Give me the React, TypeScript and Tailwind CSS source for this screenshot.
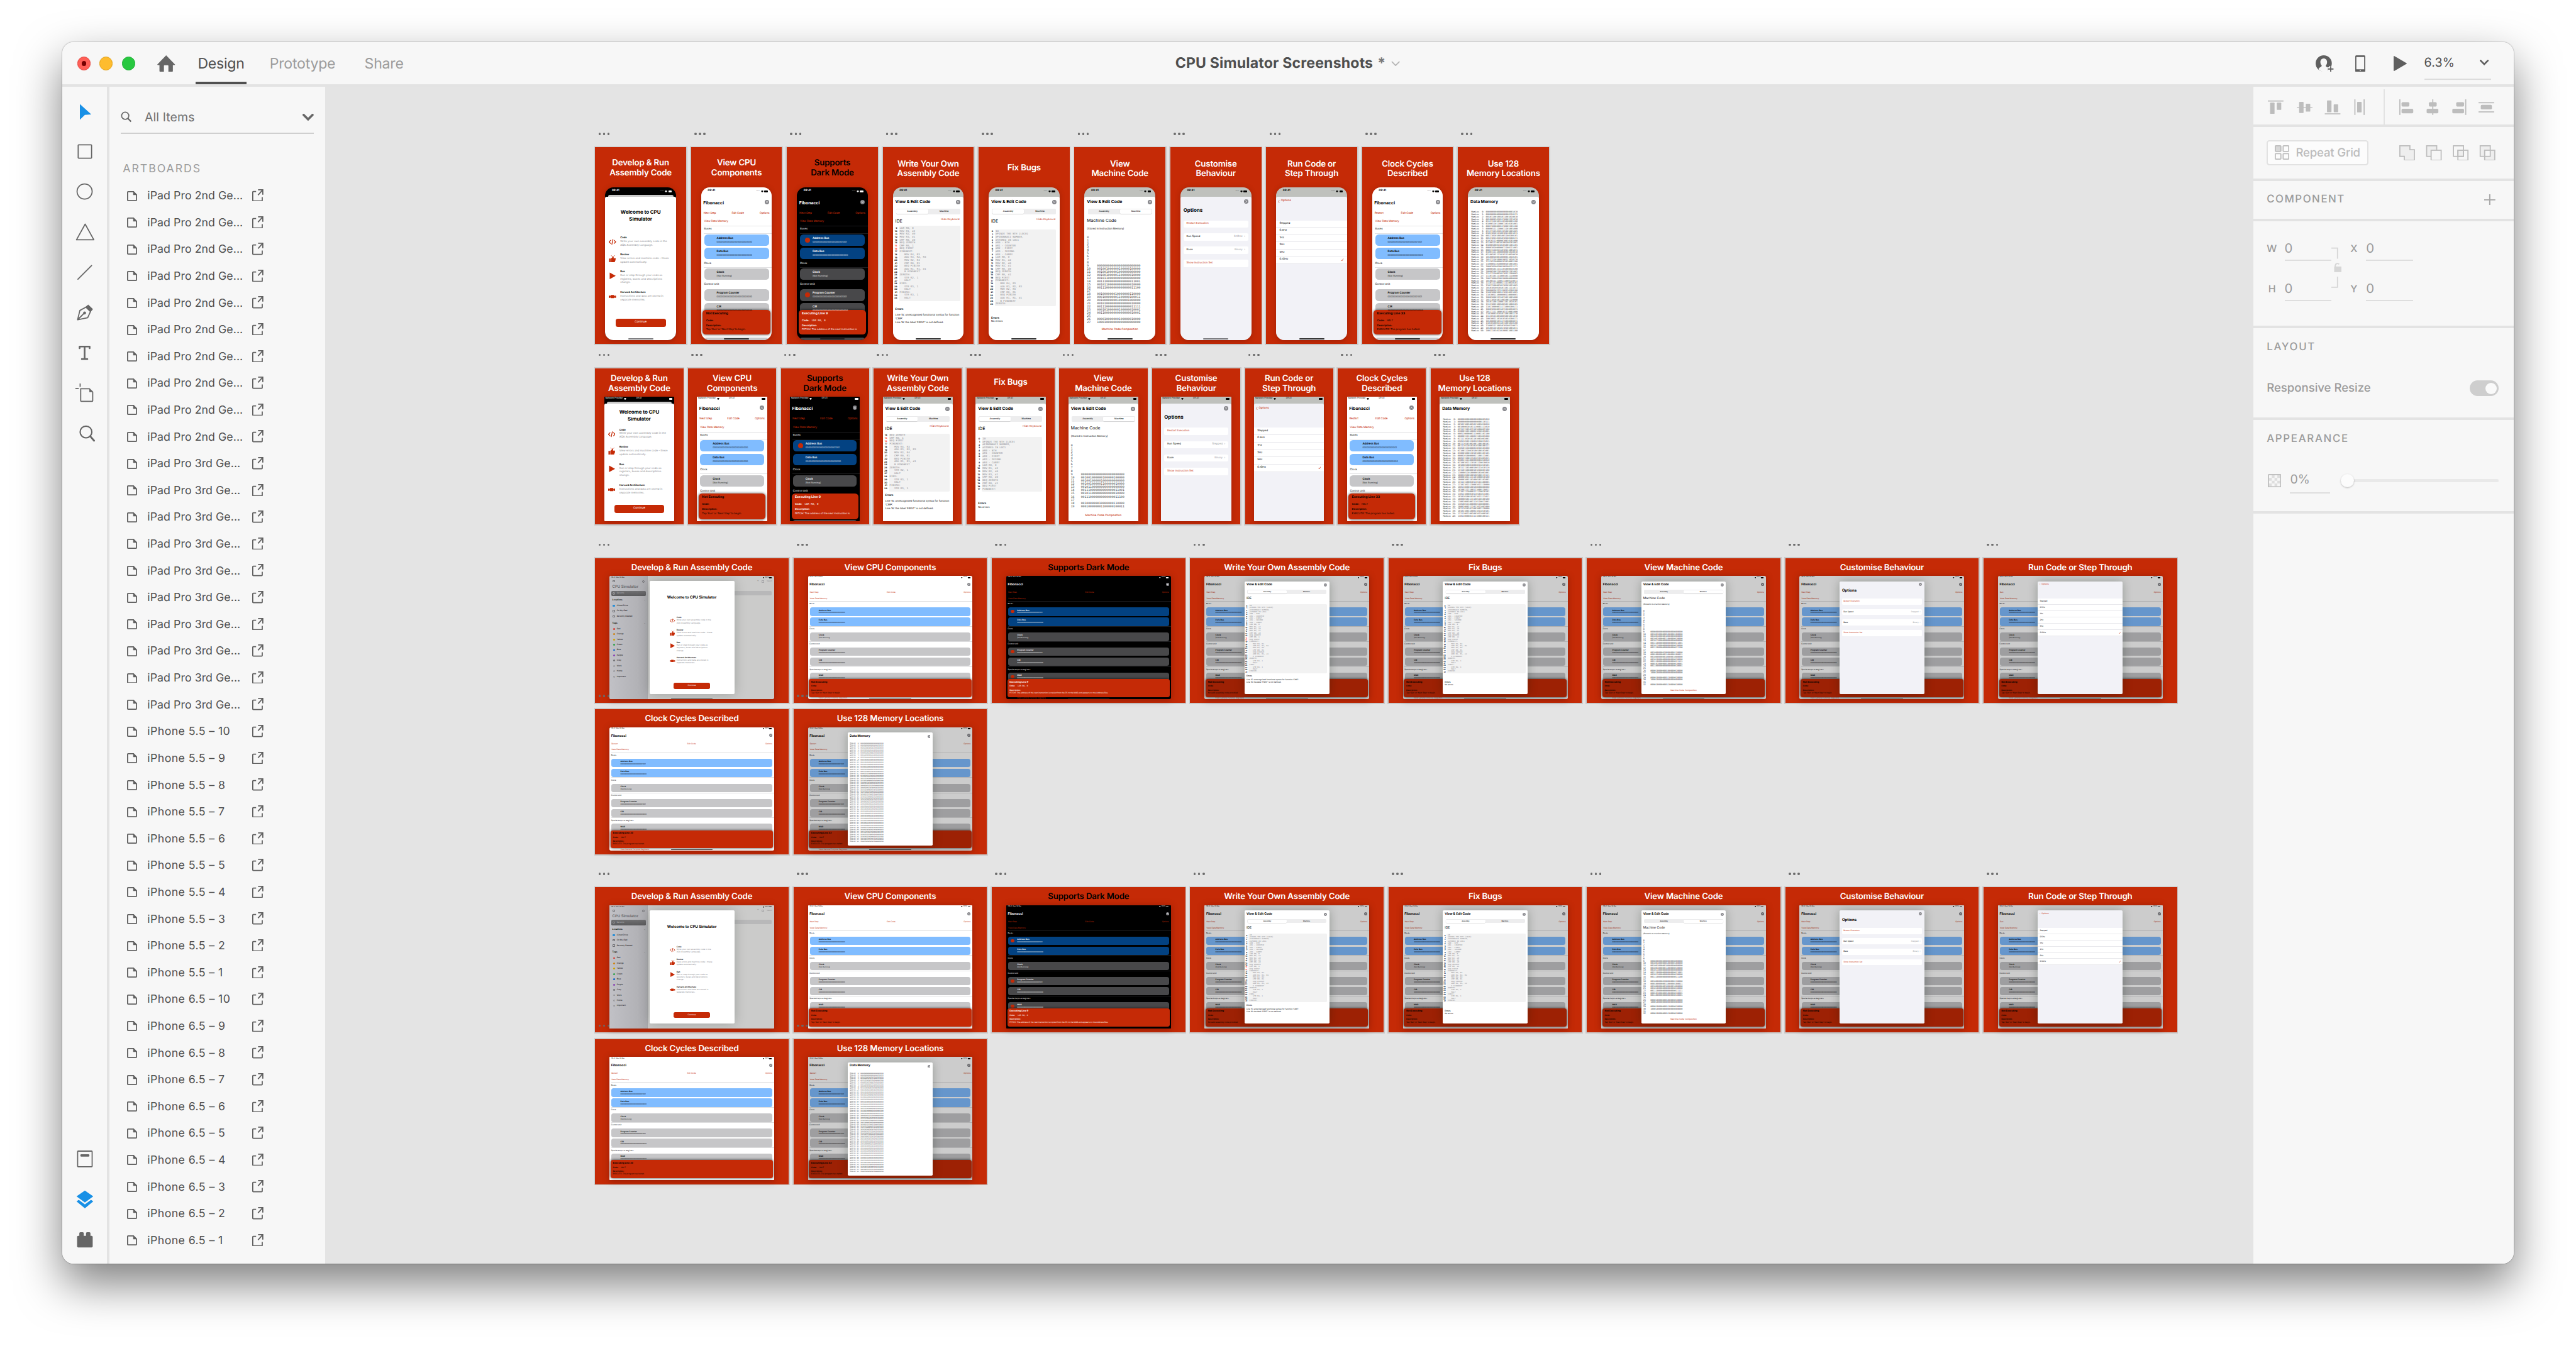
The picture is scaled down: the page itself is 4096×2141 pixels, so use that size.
import React from "react";

/* ---------- vertical flow helper ---------- */

type Item = { top: number; h: number; node: React.ReactNode };
const line = (center: number, node: React.ReactNode): Item => ({ top: center - 2, h: 4, node });
const block = (top: number, bottom: number, node: React.ReactNode): Item => ({ top, h: bottom - top, node });

function Flow({ items }: { items: Item[] }) {
  let bottom = 0;
  return (
    <div className="flex h-full w-full flex-col">
      {items.map((item, i) => {
        const marginTop = item.top - bottom;
        bottom = item.top + item.h;
        return (
          <div key={i} className="flex w-full shrink-0 items-center leading-none whitespace-nowrap" style={{ marginTop, height: item.h }}>
            {item.node}
          </div>
        );
      })}
    </div>
  );
}

/* ---------- data ---------- */

const CODE: string[] = [
  "10", "#FINDS THE NTH (LOC0)", "#FIBONNACI NUMBER,", "#STORED IN LOC1", "#R0 - NTH", "#R1 - COUNTER", "#R2 - FIRST",
  "#R3 - SECOND", "#R4 - CARRY", "LDR R0, 0", "MOV R1, #2", "MOV R2, #0", "MOV R3, #1", "CMP R0, #0", "BEQ ZEROTH",
  "CMP R0, #1", "BEQ FIRST", "FINDNEXT:", "   MOV R4, R3", "   ADD R3, R2, R3", "   MOV R2, R4", "   CMP R0, R1",
  "   BEQ FINISH", "   ADD R1, R1, #1", "   B FINDNEXT", "ZEROTH:", "   STR R2, 1", "   HALT", "FIRST:", "   STR R3, 1",
  "   HALT", "FINISH:", "   STR R3, 1", "   HALT",
];
const BROKEN = CODE.map((c, i) => (i === 15 ? "CMP R0, 1" : i === 28 ? "FIRS:" : c));

const MACHINE: Record<number, string> = {
  9: "000000000000000000000000", 10: "001001000000100000100000", 11: "001001000001000000000000", 12: "001001000001100000010000",
  13: "001011000000000000000000", 14: "001110000000000000011001", 15: "001011000000000000010000", 16: "001110000000000000011100",
  18: "001000000010000000110000", 19: "000100000001100000100011", 20: "001000000001000001000000", 21: "001010000000000000010000",
  22: "001110000000000000011111", 23: "000101000000100000010001", 24: "001100000000000000010001", 26: "000010000000100000010000",
  27: "100010000000000000000000", 29: "000010000000110000010000", 30: "100010000000000000000000", 32: "000010000000110000010000",
};

function bits(seed: number) {
  let s = (seed + 3) * 7919;
  let out = "";
  for (let i = 0; i < 24; i++) {
    s = (s * 1103515245 + 12345) % 2147483648;
    out += (s >> 16) & 1;
  }
  return out;
}
const memory = (i: number) =>
  `MemLoc ${i < 10 ? " " : ""}${i}: ${i === 0 ? "000000000000000000001010" : i === 1 ? "000000000000000000110111" : bits(i)}`;

const ZEROS = "000000000000000000000000";

/* ---------- small pieces ---------- */

function Close({ size, className = "" }: { size: number; className?: string }) {
  return (
    <svg viewBox="0 0 10 10" width={size} height={size} className={`shrink-0 ${className}`}>
      <circle cx="5" cy="5" r="5" fill="#85858a" />
      <path d="M3.3 3.3l3.4 3.4M6.7 3.3L3.3 6.7" stroke="#fff" strokeWidth="1.1" />
    </svg>
  );
}

function Wifi({ size }: { size: number }) {
  return (
    <svg viewBox="0 0 10 8" width={size} height={size * 0.8} className="shrink-0">
      <path d="M5 8L0 2.2Q5 -1.8 10 2.2z" fill="currentColor" />
    </svg>
  );
}

function FeatureIcon({ kind, size }: { kind: number; size: number }) {
  return (
    <svg viewBox="0 0 24 24" width={size} height={size} className="shrink-0" fill="#c52a06">
      {kind === 0 && <path d="M7 6L1 12l6 6M17 6l6 6-6 6M14 3l-4 18" fill="none" stroke="#c52a06" strokeWidth="2.6" />}
      {kind === 1 && (
        <>
          <path d="M1 11h5v12H1zM7 11l5-4V3c3-1 5 1 4 7h6c2 1 1 3 0 4 1 1 1 3-1 4 0 2-1 5-3 5H7z" />
          <path d="M8 0l1.500 3M14 -3v3M20 0l-2 3" stroke="#c52a06" strokeWidth="1.500" />
        </>
      )}
      {kind === 2 && <path d="M3 1l20 11L3 23z" />}
      {kind === 3 && <path d="M0 9h5v7H0zM6 7h11v10H6zM18 9h6v7h-6zM3 11h18v3H3z" />}
    </svg>
  );
}

const FEATURES = [
  { title: "Code", lines: ["Write your own assembly code in the", "AQA Assembly Language."] },
  { title: "Review", lines: ["View errors and machine code – these", "update automatically."] },
  { title: "Run", lines: ["Run or step through your code as", "registers, buses and descriptions", "change."] },
  { title: "Harvard Architecture", lines: ["Instructions and data are stored in", "separate memories."] },
];

type Exec = { title: string; code?: string; text: string; first: string };
const IDLE: Exec = { title: "Not Executing", text: "Tap ‘Run’ or ‘Next Step’ to begin.", first: "Next Step" };
const NINE: Exec = { title: "Executing Line 9", code: "LDR R0, 0", text: "FETCH: The address of the next instruction is", first: "Next Step" };
const HALT: Exec = { title: "Executing Line 33", code: "HALT", text: "EXECUTE: The program has halted.", first: "Restart" };

/* ---------- phone screens ---------- */

const TALL = {
  tall: true,
  sheet: 17,
  welcome: { title: [44, 56.500], heads: [91.500, 122, 152.500, 189.500], button: [235, 250.500] },
  fib: { title: 29, close: 26.500, links: 47.500, vdm: 62.500, rule: 68, buses: 75.500, bars: [84, 108, 145, 182.500, 207], clock: 137, unit: 174.500, panel: [219.500, 264] },
  edit: { title: 26.500, seg: [38.500, 48], head: 60, keyboard: 58.500, pitch: 5.220 },
  broken: { box: [69, 204], first: 9, last: 33, y: 74.300, errors: [220, 230, 236.500, 243] },
  fixed: { box: [75, 212.500], first: 0, last: 25, y: 79.500, errors: [235, 241] },
  machine: { stored: 74.500, y: 92, pitch: 5.650, last: 27, link: 256 },
  options: { close: 25, title: 40.500, cells: [59, 82.500, 106, 129.500] },
  run: { back: 25, list: 59, pitch: 13 },
  memory: { y: 45, pitch: 4.250, count: 51 },
};
const SHORT: typeof TALL = {
  tall: false,
  sheet: 12.500,
  welcome: { title: [26.500, 39], heads: [60.700, 91.700, 123, 160.500], button: [193.700, 208.700] },
  fib: { title: 22, close: 19.500, links: 41, vdm: 56, rule: 62, buses: 69.500, bars: [77.500, 102.500, 140.700], clock: 132.300, unit: 170.500, panel: [174, 220] },
  edit: { title: 22, seg: [35, 44.500], head: 56.500, keyboard: 54.700, pitch: 5.330 },
  broken: { box: [66.500, 170], first: 14, last: 32, y: 69.700, errors: [177.700, 188, 194.500, 201.500] },
  fixed: { box: [71.500, 170], first: 0, last: 17, y: 76.500, errors: [193, 199.500] },
  machine: { stored: 71.500, y: 89, pitch: 5.790, last: 19, link: 215 },
  options: { close: 20.500, title: 36.500, cells: [55.500, 79.500, 103.500, 127.500] },
  run: { back: 21, list: 55.500, pitch: 13.200 },
  memory: { y: 41.500, pitch: 4.340, count: 41 },
};
type Spec = typeof TALL;

function StatusBar({ spec, light }: { spec: Spec; light?: boolean }) {
  const tone = light ? "text-white" : "text-black";
  const battery = <span className="h-[3px] w-[6.500px] rounded-[1px] bg-current" />;
  return spec.tall ? (
    <div className={`flex w-full items-center pr-[7.500px] pl-[12px] text-[5px] font-semibold ${tone}`}>
      <span className="flex-1">09:41</span>
      <span className="mr-[2px] text-[5px] opacity-60">....</span>
      <Wifi size={4.500} />
      <span className="w-[1.500px]" />
      {battery}
    </div>
  ) : (
    <div className={`grid w-full grid-cols-3 items-center pr-[3px] pl-[2px] text-[4px] ${tone}`}>
      <span className="flex items-center gap-[2px] tracking-[-0.100px]">Network Provider <Wifi size={4.500} /></span>
      <span className="text-center">09:41</span>
      <span className="flex justify-end">{battery}</span>
    </div>
  );
}

function Sheet({ spec, bg, dark, children }: { spec: Spec; bg: string; dark?: boolean; children: React.ReactNode }) {
  return (
    <div className={`relative h-full w-full ${dark ? "bg-black" : "bg-[#bfc1bd]"}`}>
      {dark && <div className={`absolute inset-x-[5px] h-[8px] rounded-t-[3px] bg-[#c9c9c9] ${spec.tall ? "top-[13px]" : "top-[9px]"}`} />}
      <div className={`absolute inset-x-0 bottom-0 rounded-t-[3px] ${bg} ${spec.tall ? "top-[17px]" : "top-[12.500px]"}`} />
      <div className="absolute inset-0">{children}</div>
    </div>
  );
}

function PhoneWelcome({ spec }: { spec: Spec }) {
  const w = spec.welcome;
  const items: Item[] = [
    line(spec.tall ? 7 : 3.500, <StatusBar spec={spec} light />),
    ...w.title.map((y, i) => line(y, <span className="w-full text-center text-[9px] font-bold tracking-[-0.100px]">{["Welcome to CPU", "Simulator"][i]}</span>)),
  ];
  FEATURES.forEach((f, i) => {
    const y = w.heads[i];
    items.push(
      line(y, <span className="pl-[27px] text-[4.700px] font-semibold tracking-[-0.100px]">{f.title}</span>),
      ...f.lines.map((t, n) =>
        line(y + 6.300 + n * 6.500, (
          <>
            <span className="flex w-[27px] justify-center">{n === 0 && <FeatureIcon kind={i} size={13} />}</span>
            <span className="text-[4.800px] text-[#8b8b90]">{t}</span>
          </>
        ))
      )
    );
  });
  items.push(block(w.button[0], w.button[1], <div className="mx-[18.500px] flex h-full flex-1 items-center justify-center rounded-[4px] bg-[#c52a06] text-[5px] text-white">Continue</div>));
  return <Sheet spec={spec} bg="bg-white" dark><Flow items={items} /></Sheet>;
}

function Bar({ name, value, blue, dark, dot, pad }: { name: string; value: string; blue?: boolean; dark?: boolean; dot?: boolean; pad?: boolean }) {
  const color = blue ? (dark ? "bg-[#034282]" : "bg-[#80bcff]") : dark ? "bg-[#48484a]" : "bg-[#c6c6c8]";
  return pad ? (
    <div className={`mx-[3.500px] flex h-full flex-1 items-center rounded-[4px] ${color}`}>
      <span className="flex w-[16px] justify-center">{dot && <span className="h-[6px] w-[6px] rounded-full bg-[#c52a06]" />}</span>
      <span className="flex flex-col gap-[0.800px]">
        <span className="text-[3.600px] font-semibold">{name}</span>
        <span className="text-[3.100px] opacity-80">{value}</span>
      </span>
    </div>
  ) : (
    <div className={`mx-[5.500px] flex h-full flex-1 items-center rounded-[6px] ${color}`}>
      <span className="flex w-[22.500px] items-center justify-center">{dot && <span className="ml-[4px] h-[9px] w-[9px] rounded-full bg-[#c52a06]" />}</span>
      <span className="flex flex-col gap-[0.600px]">
        <span className="text-[5px] font-semibold tracking-[-0.050px]">{name}</span>
        <span className="text-[4.200px] opacity-80">{value}</span>
      </span>
    </div>
  );
}

function ExecPanel({ exec, dark, pad }: { exec: Exec; dark?: boolean; pad?: boolean }) {
  return (
    <div
      className={`flex h-full flex-1 flex-col bg-[#c52a06] shadow-[0_0_5px_rgba(0,0,0,0.75)] ${dark ? "text-white" : "text-black"} ${
        pad ? "mx-[2px] rounded-[4px] px-[4px] pt-[3px] text-[3.400px]" : "mx-[3px] rounded-[6px] px-[6px] pt-[4.500px] text-[4.600px]"
      }`}
    >
      <span className={`font-bold ${pad ? "text-[4.200px]" : "text-[5.800px]"}`}>{exec.title}</span>
      <span className={pad ? "mt-[4.500px]" : "mt-[6.500px]"}>
        <b className="font-semibold">Code:</b> <span className={`font-['DejaVu_Sans_Mono',monospace] ${pad ? "ml-[4px]" : "ml-[3px]"}`}>{exec.code}</span>
      </span>
      <span className={`font-semibold ${pad ? "mt-[3.500px]" : "mt-[4.500px]"}`}>Description:</span>
      <span className={pad ? "mt-[1.500px]" : "mt-[2.400px]"}>{exec.text}</span>
    </div>
  );
}

function PhoneFib({ spec, exec, dark }: { spec: Spec; exec: Exec; dark?: boolean }) {
  const f = spec.fib;
  const rule = <div className={`ml-[5px] h-[0.600px] flex-1 ${dark ? "bg-[#1c1c1e]" : "bg-[#e2e2e4]"}`} />;
  const label = (t: string) => <span className="pl-[5.500px] text-[4.800px]">{t}</span>;
  const bar = (i: number, name: string, value: string, blue?: boolean, dot?: boolean) =>
    block(f.bars[i], f.bars[i] + 20.800, <Bar name={name} value={value} blue={blue} dark={dark} dot={dark && dot} />);
  const items: Item[] = [
    line(spec.tall ? 7 : 3.500, <StatusBar spec={spec} light={dark} />),
    line(f.close, <Close size={7.800} className="mr-[5.500px] ml-auto" />),
    line(f.title, <span className="pl-[4px] text-[7.800px] font-bold">Fibonacci</span>),
    line(f.links, <div className="flex w-full justify-between px-[4.500px] text-[5px] tracking-[-0.100px] text-[#c52a06]"><span>{exec.first}</span><span>Edit Code</span><span>Options</span></div>),
    line(f.vdm, <span className="pl-[5.500px] text-[5px] tracking-[-0.100px] text-[#c52a06]">View Data Memory</span>),
    line(f.rule + 1, rule),
    line(f.buses, label("Buses")),
    line(f.buses + 6.500, rule),
    bar(0, "Address Bus", exec.code ? ZEROS.slice(0, 20) + "1001" : ZEROS, true, true),
    bar(1, "Data Bus", ZEROS, true),
    line(f.clock, label("Clock")),
    line(f.clock + 6, rule),
    bar(2, "Clock", "[Not Running]"),
    line(f.unit, label("Control Unit")),
  ];
  if (spec.tall) items.push(bar(3, "Program Counter", exec.code ? ZEROS.slice(0, 20) + "1001" : ZEROS, false, true), bar(4, "CIR", ZEROS));
  items.push(block(f.panel[0], f.panel[1], <ExecPanel exec={exec} dark={dark} />));
  items.push(block(spec.tall ? 269 : 221, spec.tall ? 276 : 226, <div className={`mx-[6px] h-full flex-1 rounded-t-[4px] ${dark ? "bg-[#48484a]" : "bg-[#c6c6c8]"}`} />));
  return <div className={`h-full w-full ${dark ? "bg-black text-white" : "bg-white"}`}><Flow items={items} /></div>;
}

function Segments({ right }: { right?: boolean }) {
  const on = "h-full flex-1 rounded-[1.500px] bg-white shadow-[0_0.500px_1px_rgba(0,0,0,0.2)] flex items-center justify-center";
  const off = "h-full flex-1 flex items-center justify-center";
  return (
    <div className="flex h-full w-full rounded-[2px] bg-[#ededee] p-[0.600px] font-medium">
      <span className={right ? off : on}>Assembly</span>
      <span className={right ? on : off}>Machine</span>
    </div>
  );
}

function editHead(spec: Spec, right: boolean): Item[] {
  const e = spec.edit;
  return [
    line(spec.tall ? 7 : 3.500, <StatusBar spec={spec} />),
    line(e.title, <><span className="pl-[4.500px] text-[7.700px] font-bold tracking-[-0.050px]">View &amp; Edit Code</span><Close size={7.800} className="mr-[5.500px] ml-auto" /></>),
    block(e.seg[0], e.seg[1], <div className="h-full w-full px-[6px] text-[4px]"><Segments right={right} /></div>),
  ];
}

function codeItem(code: string[], first: number, last: number, box: number[], y: number, pitch: number, bad: boolean, small?: boolean): Item {
  const rows: Item[] = [];
  for (let i = first; i <= last; i++) {
    rows.push(
      line(y - box[0] + (i - first) * pitch, (
        <>
          <span className={`text-right font-bold ${small ? "w-[5px]" : "w-[8px]"} ${bad && (i === 15 || i === 16) ? "text-[#ff3b30]" : "text-black"}`}>{i}</span>
          <span className={`font-['Liberation_Mono',monospace] whitespace-pre text-[#85858a] ${small ? "pl-[4px] text-[3.350px]" : "pl-[4.500px] text-[4.650px]"}`}>{code[i]}</span>
        </>
      ))
    );
  }
  return block(box[0], box[1], (
    <div className={`relative h-full w-full ${small ? "pr-[4px] pl-[7px] text-[3px]" : "pr-[6px] pl-[11.500px] text-[4px]"}`}>
      <div className="h-full w-full rounded-[2px] bg-[#f2f2f2]" />
      <div className="absolute inset-0"><Flow items={rows} /></div>
    </div>
  ));
}

function PhoneEdit({ spec, bad }: { spec: Spec; bad?: boolean }) {
  const e = spec.edit;
  const d = bad ? spec.broken : spec.fixed;
  const messages = bad
    ? ["Line 15: unrecognised functional syntax for function", "‘CMP’.", "Line 16: the label ‘FIRST’ is not defined."]
    : ["No errors"];
  const items: Item[] = [
    ...editHead(spec, false),
    line(e.head, <span className="pl-[4.500px] text-[8px]">IDE</span>),
    line(e.keyboard, <span className="mr-[7.500px] ml-auto text-[4.800px] text-[#c52a06]">Hide Keyboard</span>),
    codeItem(bad ? BROKEN : CODE, d.first, d.last, d.box, d.y, e.pitch, !!bad),
    line(d.errors[0], <span className="pl-[4.500px] text-[5px] font-semibold">Errors</span>),
    ...messages.map((m, i) => line(d.errors[i + 1], <span className="pl-[4.500px] text-[4.700px]">{m}</span>)),
  ];
  return <Sheet spec={spec} bg="bg-white"><Flow items={items} /></Sheet>;
}

function PhoneMachine({ spec }: { spec: Spec }) {
  const m = spec.machine;
  const items: Item[] = [
    ...editHead(spec, true),
    line(spec.edit.head, <span className="pl-[4.500px] text-[7.700px]">Machine Code</span>),
    line(m.stored, <span className="pl-[4.500px] text-[4.600px]">(Stored in Instruction Memory)</span>),
  ];
  for (let i = 0; i <= m.last; i++)
    items.push(line(m.y + i * m.pitch, <div className="flex pl-[4.500px] font-['DejaVu_Sans_Mono',monospace] text-[5.400px] text-[#3a3a3a]"><span className="w-[18px]">{i}</span><span>{MACHINE[i]}</span></div>));
  items.push(line(m.link, <span className="w-full text-center text-[5px] text-[#c52a06]">Machine Code Composition</span>));
  return <Sheet spec={spec} bg="bg-white"><Flow items={items} /></Sheet>;
}

function cell(left: string, right?: string) {
  return (
    <>
      <span className={right ? "" : "text-[#c52a06]"}>{left}</span>
      {right && <span className="ml-auto text-[#98989d]">{right} &nbsp;›</span>}
    </>
  );
}

function PhoneOptions({ spec, speed }: { spec: Spec; speed: string }) {
  const o = spec.options;
  const cells = [cell("Restart Execution"), cell("Run Speed", speed), cell("Base", "Binary"), cell("Show Instruction Set")];
  const items: Item[] = [
    line(spec.tall ? 7 : 3.500, <StatusBar spec={spec} />),
    line(o.close, <Close size={8} className="mr-[5.500px] ml-auto" />),
    line(o.title, <span className="pl-[5.500px] text-[9px] font-bold">Options</span>),
    ...o.cells.map((y, i) => block(y, y + 13, <div className="mx-[5.500px] flex h-full flex-1 items-center rounded-[2.500px] bg-white px-[5.500px] text-[4.800px]">{cells[i]}</div>)),
  ];
  return <Sheet spec={spec} bg="bg-[#f2f2f7]"><Flow items={items} /></Sheet>;
}

const SPEEDS = ["Stepped", "0.5Hz", "1Hz", "2Hz", "5Hz", "0.1GHz"];
function Check({ size }: { size: number }) {
  return (
    <svg viewBox="0 0 10 10" width={size} height={size} className="ml-auto">
      <path d="M1 6l3 3 5-8" fill="none" stroke="#c52a06" strokeWidth="1.600" />
    </svg>
  );
}

function PhoneRun({ spec }: { spec: Spec }) {
  const r = spec.run;
  const items: Item[] = [
    line(spec.tall ? 7 : 3.500, <StatusBar spec={spec} />),
    line(r.back, <span className="flex items-center gap-[2px] pl-[3.500px] text-[5px] text-[#c52a06]"><svg viewBox="0 0 5 10" width="3" height="6"><path d="M4.500 .5L1 5l3.500 4.500" fill="none" stroke="currentColor" /></svg>Options</span>),
    ...SPEEDS.map((s, i) =>
      block(r.list + i * r.pitch, r.list + (i + 1) * r.pitch, (
        <div className="flex h-full w-full items-center border-b-[0.600px] border-[#e8e8ec] bg-white px-[6px] text-[4.800px]">{s}{i === 5 && <Check size={5} />}</div>
      ))
    ),
  ];
  return <Sheet spec={spec} bg="bg-[#f2f2f7]"><Flow items={items} /></Sheet>;
}

function PhoneMemory({ spec }: { spec: Spec }) {
  const m = spec.memory;
  const items: Item[] = [
    line(spec.tall ? 7 : 3.500, <StatusBar spec={spec} />),
    line(spec.edit.title, <><span className="pl-[4.500px] text-[7.700px] font-bold tracking-[-0.100px]">Data Memory</span><Close size={7.800} className="mr-[5.500px] ml-auto" /></>),
  ];
  for (let i = 0; i < m.count; i++)
    items.push(line(m.y + i * m.pitch, <span className="pl-[6px] font-['DejaVu_Sans_Mono',monospace] text-[3.950px] whitespace-pre text-[#3a3a3a]">{memory(i)}</span>));
  return <Sheet spec={spec} bg="bg-white"><Flow items={items} /></Sheet>;
}

/* ---------- tablet screens ---------- */

function TabletStatus() {
  return (
    <div className="flex w-full items-center gap-[1px] pr-[4px] pl-[3px] text-[2.800px]">
      <span className="flex-1">09:41 &nbsp;Wed 18 Mar</span>
      <Wifi size={2.800} />100%
      <span className="h-[2px] w-[4.500px] rounded-[0.500px] bg-current" />
    </div>
  );
}

function TabletFib({ exec, dark, large }: { exec: Exec; dark?: boolean; large?: boolean }) {
  const rule = <div className={`ml-[3px] h-[0.600px] flex-1 ${dark ? "bg-[#1c1c1e]" : "bg-[#dededf]"}`} />;
  const label = (t: string) => <span className="pl-[3px] text-[3.300px]">{t}</span>;
  const bar = (top: number, name: string, value: string, blue?: boolean, dot?: boolean) =>
    block(top, top + 15.200, <Bar pad name={name} value={value} blue={blue} dark={dark} dot={dark && dot} />);
  const value = exec.code ? ZEROS.slice(0, 20) + "1001" : ZEROS;
  const items: Item[] = [
    line(3, <TabletStatus />),
    line(15, <Close size={5.800} className="mr-[3.500px] ml-auto" />),
    line(16.500, <span className="pl-[3px] text-[5.700px] font-bold">Fibonacci</span>),
    line(30, <div className="flex w-full justify-between px-[3.500px] text-[3.400px] text-[#c52a06]"><span>{exec.first}</span><span>Edit Code</span><span>Options</span></div>),
    line(41, <span className="pl-[3.500px] text-[3.500px] text-[#c52a06]">View Data Memory</span>),
    line(45.500, rule),
    line(50.500, label("Buses")),
    bar(56.500, "Address Bus", value, true, true),
    bar(74.500, "Data Bus", ZEROS, true),
    line(90, rule),
    line(95.500, label("Clock")),
    bar(101.500, "Clock", "[Not Running]"),
    line(117.500, rule),
    line(122.500, label("Control Unit")),
    bar(128.500, "Program Counter", value, false, true),
    bar(146.500, "CIR", ZEROS),
    line(162.500, rule),
    line(168, label("Special Purpose Registers")),
    bar(173.500, "MAR", ZEROS, false, true),
    block(185, 217.500, <ExecPanel pad exec={exec} dark={dark} />),
  ];
  if (!large) items.push(line(219.300, <span className="pl-[19.500px] text-[3.400px] text-[#c52a06]">View General Purpose Registers</span>));
  return <div className={`h-full w-full ${dark ? "bg-black text-white" : "bg-white"}`}><Flow items={items} /></div>;
}

function TabletModal({ exec, large, bg, items }: { exec: Exec; large?: boolean; bg: string; items: Item[] }) {
  return (
    <div className="relative h-full w-full">
      <TabletFib exec={exec} large={large} />
      <div className="absolute inset-0 bg-black/20" />
      <div className={`absolute top-[9.600px] left-[71.500px] h-[202.500px] w-[152px] overflow-hidden rounded-[2px] shadow-[0_0_18px_rgba(0,20,0,0.28)] ${bg}`}>
        <Flow items={items} />
      </div>
    </div>
  );
}

const modalClose = <Close size={5.500} className="mr-[4px] ml-auto" />;
const modalTitle = (t: string) => line(7, <><span className="pl-[3.500px] text-[5.600px] font-bold">{t}</span>{modalClose}</>);
const modalSegments = (right: boolean) => block(15.500, 22.500, <div className="h-full w-full px-[5px] text-[3px]"><Segments right={right} /></div>);

function modalEdit(bad: boolean): Item[] {
  return [
    modalTitle("View & Edit Code"),
    modalSegments(false),
    line(31.500, <span className="pl-[3.500px] text-[5.800px]">IDE</span>),
    codeItem(bad ? BROKEN : CODE, 0, 31, [41, 164.500], 44.800, 3.800, bad, true),
    ...(bad
      ? [
          line(170, <span className="pl-[3.500px] text-[3.500px] font-semibold">Errors</span>),
          line(177, <span className="pl-[3.500px] text-[3.400px]">Line 15: unrecognised functional syntax for function ‘CMP’.</span>),
          line(181.700, <span className="pl-[3.500px] text-[3.400px]">Line 16: the label ‘FIRST’ is not defined.</span>),
        ]
      : [
          line(181, <span className="pl-[3.500px] text-[3.500px] font-semibold">Errors</span>),
          line(185.500, <span className="pl-[3.500px] text-[3.400px]">No errors</span>),
        ]),
  ];
}

function modalMachine(): Item[] {
  const items: Item[] = [
    modalTitle("View & Edit Code"),
    modalSegments(true),
    line(31.500, <span className="pl-[3.500px] text-[5.700px]">Machine Code</span>),
    line(42, <span className="pl-[3.500px] text-[3.300px]">(Stored in Instruction Memory)</span>),
  ];
  for (let i = 0; i <= 32; i++)
    items.push(line(54.500 + i * 4.110, <div className="flex pl-[3.500px] font-['DejaVu_Sans_Mono',monospace] text-[4px] text-[#3a3a3a]"><span className="w-[13px]">{i}</span><span>{MACHINE[i]}</span></div>));
  items.push(line(196, <span className="w-full text-center text-[3.600px] text-[#c52a06]">Machine Code Composition</span>));
  return items;
}

function modalOptions(): Item[] {
  const cells = [cell("Restart Execution"), cell("Run Speed", "Stepped"), cell("Base", "Binary"), cell("Show Instruction Set")];
  return [
    line(6, modalClose),
    line(17.300, <span className="pl-[4.500px] text-[6.800px] font-bold">Options</span>),
    ...cells.map((c, i) => block(31 + i * 18.700, 42 + i * 18.700, <div className="mx-[4px] flex h-full flex-1 items-center rounded-[2px] bg-white px-[3px] text-[3.500px]">{c}</div>)),
  ];
}

function modalRun(): Item[] {
  return [
    line(6, <span className="pl-[3px] text-[3.600px] text-[#c52a06]">‹ &nbsp;Options</span>),
    ...SPEEDS.map((s, i) => block(31 + i * 11.200, 31 + (i + 1) * 11.200, <div className="flex h-full w-full items-center border-b-[0.600px] border-[#e8e8ec] bg-white px-[3.500px] text-[3.400px]">{s}{i === 5 && <Check size={3.500} />}</div>)),
  ];
}

function modalMemory(): Item[] {
  const items: Item[] = [modalTitle("Data Memory")];
  for (let i = 0; i < 57; i++)
    items.push(line(21 + i * 3.130, <span className="pl-[4px] font-['DejaVu_Sans_Mono',monospace] text-[2.870px] whitespace-pre text-[#3a3a3a]">{memory(i)}</span>));
  return items;
}

const PLACES = [["bg-[#2a8fd6]", "iCloud Drive"], ["border-[0.500px] border-[#6b6b6f]", "On My iPad"], ["border-[0.500px] border-[#6b6b6f]", "Recently Deleted"]];
const TAGS = [
  ["bg-[#d93a30]", "Red"], ["bg-[#cf8412]", "Orange"], ["bg-[#d0a400]", "Yellow"], ["bg-[#2fa34b]", "Green"], ["bg-[#0a62cc]", "Blue"],
  ["bg-[#8a44b4]", "Purple"], ["bg-[#727276]", "Grey"], ["border-[0.500px] border-[#8e8e92]", "Work"], ["border-[0.500px] border-[#8e8e92]", "Home"], ["border-[0.500px] border-[#8e8e92]", "Important"],
];

function TabletWelcome() {
  const side: Item[] = [
    line(10, <div className="flex w-full justify-between px-[5px]"><span className="h-[4px] w-[5.500px] rounded-[0.500px] border-[0.500px] border-[#77777b]" /><span className="h-[4.500px] w-[4.500px] rounded-full border-[0.500px] border-[#77777b]" /></div>),
    line(20.500, <span className="pl-[5px] text-[6.800px] font-semibold tracking-[-0.050px] text-[#66666a]">CPU Simulator</span>),
    block(26.500, 36, <div className="mx-[3px] flex h-full flex-1 items-center gap-[3px] rounded-[2px] bg-gradient-to-b from-[#707072] to-[#5a5a5c] pl-[2.500px] text-[3.500px] text-[#b5b5b8]"><span className="h-[4.500px] w-[4.500px] rounded-full border-[0.500px] border-[#a0a0a3]" />Recents</div>),
    line(43.500, <div className="flex w-full justify-between px-[5px] text-[3.800px] font-bold"><span>Locations</span><span className="rotate-90 text-[#77777b]">›</span></div>),
    ...PLACES.map(([c, t], i) => line(53.500 + i * 9.550, <><span className={`mr-[3px] ml-[6px] h-[3.800px] w-[4px] rounded-[1px] ${c}`} /><span className="text-[3.500px]">{t}</span></>)),
    line(85, <div className="flex w-full justify-between px-[5px] text-[3.800px] font-bold"><span>Tags</span><span className="rotate-90 text-[#77777b]">›</span></div>),
    ...TAGS.map(([c, t], i) => line(95 + i * 9.520, <><span className={`mr-[3.500px] ml-[6.500px] h-[3.200px] w-[3.200px] rounded-full ${c}`} /><span className="text-[3.500px]">{t}</span></>)),
  ];
  const modal: Item[] = [line(30.500, <span className="w-full text-center text-[6.900px] font-bold tracking-[-0.050px]">Welcome to CPU Simulator</span>)];
  const heads = [66.500, 89, 111.500, 138.500];
  FEATURES.forEach((f, i) => {
    modal.push(
      line(heads[i], <span className="pl-[48.500px] text-[3.500px] font-semibold">{f.title}</span>),
      ...f.lines.map((t, n) =>
        line(heads[i] + 4.500 + n * 4.700, (
          <>
            <span className="flex w-[48.500px] justify-end pr-[2px]">{n === 0 && <FeatureIcon kind={i} size={9.500} />}</span>
            <span className="text-[3.550px] text-[#8b8b90]">{t}</span>
          </>
        ))
      )
    );
  });
  modal.push(block(182.500, 193.500, <div className="mx-auto flex h-full w-[65px] items-center justify-center rounded-[3px] bg-[#c52a06] text-[3.500px] text-white">Continue</div>));
  return (
    <div className="relative flex h-full w-full bg-[#cbcbca]">
      <div className="w-[69px] border-r-[0.500px] border-[#a8a8ab] bg-gradient-to-r from-[#c1c1c6] to-[#adadb1]"><Flow items={side} /></div>
      <div className="flex-1">
        <Flow
          items={[
            line(10, <div className="ml-auto flex items-center gap-[5px] pr-[4px] text-[3.200px] text-[#8e8e92]"><span className="text-[5px]">+</span><span className="h-[4px] w-[4px] border-[0.800px] border-[#a5a5a8]" />Select</div>),
            block(26.500, 34.500, <div className="mr-[4px] ml-[10px] h-full flex-1 rounded-[2px] bg-[#b8b8b9]" />),
          ]}
        />
      </div>
      <div className="absolute inset-x-0 top-[1px] h-[4px]"><TabletStatus /></div>
      <div className="absolute top-[9px] left-[71.500px] h-[203px] w-[152px] rounded-[2px] bg-white shadow-[0_0_22px_rgba(0,20,0,0.22)]"><Flow items={modal} /></div>
    </div>
  );
}

/* ---------- artboards ---------- */

const TITLES = [
  ["Develop & Run", "Assembly Code"], ["View CPU", "Components"], ["Supports", "Dark Mode"], ["Write Your Own", "Assembly Code"], ["Fix Bugs"],
  ["View", "Machine Code"], ["Customise", "Behaviour"], ["Run Code or", "Step Through"], ["Clock Cycles", "Described"], ["Use 128", "Memory Locations"],
];

function Dots() {
  return (
    <div className="flex h-[34px] gap-[4px] pt-[10px] pl-[8px]">
      <span className="h-[4px] w-[4px] rounded-full bg-[#6b6b6b]" />
      <span className="h-[4px] w-[4px] rounded-full bg-[#6b6b6b]" />
      <span className="h-[4px] w-[4px] rounded-full bg-[#6b6b6b]" />
    </div>
  );
}

function phoneScreen(i: number, spec: Spec) {
  switch (i) {
    case 0: return <PhoneWelcome spec={spec} />;
    case 1: return <PhoneFib spec={spec} exec={IDLE} />;
    case 2: return <PhoneFib spec={spec} exec={NINE} dark />;
    case 3: return <PhoneEdit spec={spec} bad />;
    case 4: return <PhoneEdit spec={spec} />;
    case 5: return <PhoneMachine spec={spec} />;
    case 6: return <PhoneOptions spec={spec} speed={spec.tall ? "0.1GHz" : "Stepped"} />;
    case 7: return <PhoneRun spec={spec} />;
    case 8: return <PhoneFib spec={spec} exec={HALT} />;
    default: return <PhoneMemory spec={spec} />;
  }
}

function PhoneBoard({ i, spec }: { i: number; spec: Spec }) {
  const lines = TITLES[i];
  const top = spec.tall ? (lines.length === 1 ? "pt-[28px]" : i < 3 ? "pt-[18.500px]" : "pt-[20.500px]") : lines.length === 1 ? "pt-[16.500px]" : "pt-[9.500px]";
  return (
    <div className="shrink-0">
      <Dots />
      <div className={`bg-[#cacaca] p-[2px] ${spec.tall ? "h-[356px] w-[167px]" : "h-[284px] w-[162px]"}`}>
        <div className="h-full w-full bg-[#c52a06]">
          <div className={`flex flex-col items-center text-[15px] leading-[18px] font-semibold tracking-[-0.200px] whitespace-nowrap ${top} ${i === 2 ? "text-black" : "text-white"} ${spec.tall ? "h-[72px]" : "h-[51px]"}`}>
            {lines.map((t) => <span key={t}>{t}</span>)}
          </div>
          <div className={`relative mx-auto overflow-hidden shadow-[0_2px_10px_rgba(60,0,0,0.25)] ${spec.tall ? "h-[274px] w-[127px] rounded-[15px]" : "h-[223px] w-[125.500px] rounded-[1px]"}`}>
            {phoneScreen(i, spec)}
            {spec.tall && <div className={`absolute bottom-[2px] left-[41px] h-[2px] w-[45px] rounded-full ${i === 2 ? "bg-[#1c1c1e]" : i === 0 || i === 6 ? "bg-[#77777a]" : "bg-[#2a2a2a]"}`} />}
          </div>
        </div>
      </div>
    </div>
  );
}

function tabletScreen(i: number, large: boolean) {
  switch (i) {
    case 0: return <TabletWelcome />;
    case 1: return <TabletFib exec={IDLE} large={large} />;
    case 2: return <TabletFib exec={{ ...NINE, text: "FETCH: The address of the next instruction is copied from the PC to the MAR and appears on the Address Bus." }} dark large={large} />;
    case 3: return <TabletModal exec={{ ...IDLE, text: "No valid assembly code provided." }} large={large} bg="bg-white" items={modalEdit(true)} />;
    case 4: return <TabletModal exec={IDLE} large={large} bg="bg-white" items={modalEdit(false)} />;
    case 5: return <TabletModal exec={IDLE} large={large} bg="bg-white" items={modalMachine()} />;
    case 6: return <TabletModal exec={IDLE} large={large} bg="bg-[#f2f2f7]" items={modalOptions()} />;
    case 7: return <TabletModal exec={{ ...IDLE, first: "Run" }} large={large} bg="bg-[#f2f2f7]" items={modalRun()} />;
    case 8: return <TabletFib exec={HALT} large={large} />;
    default: return <TabletModal exec={HALT} large={large} bg="bg-white" items={modalMemory()} />;
  }
}

function TabletBoard({ i, large }: { i: number; large: boolean }) {
  return (
    <div className="shrink-0">
      <Dots />
      <div className="h-[264px] w-[350.500px] bg-[#cacaca] p-[2px]">
        <div className="h-full w-full bg-[#c52a06]">
          <div className={`h-[32px] pt-[8px] text-center text-[15px] leading-[18px] font-semibold tracking-[-0.200px] whitespace-nowrap ${i === 2 ? "text-black" : "text-white"}`}>{TITLES[i].join(" ")}</div>
          <div className={`relative mx-auto h-[221px] w-[295px] overflow-hidden shadow-[0_2px_12px_rgba(60,0,0,0.35)] ${large ? "rounded-[1px]" : "rounded-[3px]"}`}>
            {tabletScreen(i, large)}
            {!large && <div className={`absolute bottom-[1px] left-[110px] h-[1.500px] w-[75px] rounded-full ${i === 2 ? "bg-[#2a2a2c]" : "bg-[#3c3c3c]"}`} />}
          </div>
        </div>
      </div>
    </div>
  );
}

function Canvas() {
  const all = [0, 1, 2, 3, 4, 5, 6, 7, 8, 9];
  return (
    <main className="flex w-[3454px] flex-col bg-[#e4e4e4] pt-[72px] pl-[482px]">
      <div className="flex gap-[4.700px]">{all.map((i) => <PhoneBoard key={i} i={i} spec={TALL} />)}</div>
      <div className="mt-[6px] flex gap-[4.300px]">{all.map((i) => <PhoneBoard key={i} i={i} spec={SHORT} />)}</div>
      <div className="mt-[22px] flex gap-[4.800px]">{all.slice(0, 8).map((i) => <TabletBoard key={i} i={i} large={false} />)}</div>
      <div className="mt-[-27px] flex gap-[4.800px]">{all.slice(8).map((i) => <TabletBoard key={i} i={i} large={false} />)}</div>
      <div className="mt-[21px] flex gap-[4.800px]">{all.slice(0, 8).map((i) => <TabletBoard key={i} i={i} large />)}</div>
      <div className="mt-[-26px] flex gap-[4.800px]">{all.slice(8).map((i) => <TabletBoard key={i} i={i} large />)}</div>
    </main>
  );
}

/* ---------- window chrome ---------- */

function Header() {
  return (
    <header className="flex h-[80px] shrink-0 border-b-[4.600px] border-[#e3e3e3] bg-[#f7f7f7] text-[26px] leading-none whitespace-nowrap">
      <div className="flex w-[1993px] items-center pl-[26px]">
        <div className="flex gap-[16px]">
          <span className="flex h-[24px] w-[24px] items-center justify-center rounded-full border border-[#e2463f] bg-[#ff5f57]"><span className="h-[8px] w-[8px] rounded-full bg-[#750000]" /></span>
          <span className="h-[24px] w-[24px] rounded-full border border-[#e1a116] bg-[#febc2e]" />
          <span className="h-[24px] w-[24px] rounded-full border border-[#1fae36] bg-[#28c840]" />
        </div>
        <svg viewBox="0 0 32 30" width="32" height="30" className="ml-[40px]" fill="#666">
          <path d="M16 0l16 16.500-1 1h-3V28a1.500 1.500 0 0 1-1.500 1.500H20V19a1.200 1.200 0 0 0-1.200-1.200h-5.600A1.200 1.200 0 0 0 12 19v10.500H5.500A1.500 1.500 0 0 1 4 28V17.500H1l-1-1z" />
        </svg>
        <div className="ml-[36px] flex h-full w-[92px] items-center justify-center border-b-[4.600px] border-[#505050] pt-[6px] tracking-[-0.300px] text-[#4f4f4f]">Design</div>
        <div className="ml-[41px] w-[118px] pt-[2px] tracking-[-0.250px] text-[#9c9c9c]">Prototype</div>
        <div className="ml-[52px] pt-[2px] tracking-[-0.250px] text-[#9c9c9c]">Share</div>
      </div>
      <div className="flex items-center font-bold tracking-[0.200px] text-[#4f4f4f]">
        CPU Simulator Screenshots <span className="ml-[8px] text-[#7a7a7a]">*</span>
        <svg viewBox="0 0 16 10" width="16" height="10" className="ml-[10px]"><path d="M1 1l7 7 7-7" fill="none" stroke="#b5b5b5" strokeWidth="2" /></svg>
      </div>
      <div className="ml-auto flex items-center pr-[40px]">
        <svg viewBox="0 0 32 30" width="32" height="30">
          <circle cx="14.500" cy="14.500" r="14.500" fill="#5f5f5f" />
          <path d="M14.500 5.500c3.500 0 6 2.600 6 6.500 0 2.600-1 5-2.500 6.300 0 2 1.500 2.500 4.500 3.700l-1 6a14 14 0 0 1-15-1.500c-1-.8-1.500-2-1-2.500 1-2.500 5.500-3 5.500-5.700-1.500-1.300-2.500-3.700-2.500-6.300 0-3.900 2.500-6.500 6-6.500z" fill="#f7f7f7" />
          <path d="M27 19.500v10M22 24.500h10" stroke="#f7f7f7" strokeWidth="6" />
          <path d="M27 19.500v10M22 24.500h10" stroke="#5f5f5f" strokeWidth="2" />
        </svg>
        <svg viewBox="0 0 18 30" width="18" height="30" className="ml-[39px]">
          <path fillRule="evenodd" d="M2 0h14a2 2 0 0 1 2 2v26a2 2 0 0 1-2 2H2a2 2 0 0 1-2-2V2a2 2 0 0 1 2-2zM2 3v22h14V3zM8 26.500v1.500h2v-1.500z" fill="#5f5f5f" />
        </svg>
        <svg viewBox="0 0 24 27" width="24" height="27" className="ml-[50px]"><path d="M1 0l23 13.500L1 27a1 1 0 0 1-1-1V1a1 1 0 0 1 1-1z" fill="#5f5f5f" /></svg>
        <div className="mt-[-8px] ml-[31px] flex h-[52px] w-[120px] translate-y-[8px] items-center border-b-[2.300px] border-[#dcdcdc] pr-[4px] pb-[8px] text-[22px] tracking-[0.200px] text-[#4f4f4f]">
          6.3%
          <svg viewBox="0 0 16 10" width="16" height="10" className="ml-auto"><path d="M1.500 1.500L8 8l6.500-6.500" fill="none" stroke="#5f5f5f" strokeWidth="3" strokeLinecap="round" /></svg>
        </div>
      </div>
    </header>
  );
}

const toolCell = "flex h-[72px] w-full items-center justify-center";

function Toolbar() {
  const s = { fill: "none", stroke: "#666", strokeWidth: 2 };
  return (
    <nav className="flex w-[84px] shrink-0 flex-col border-r-[4.600px] border-[#e3e3e3] bg-[#f7f7f7] pt-[8px] pb-[8px]">
      <div className={toolCell}><svg viewBox="0 0 36 36" width="36" height="36"><path d="M9 4l20.500 18.500-11.500 1L9 32z" fill="#1890e6" /></svg></div>
      <div className={toolCell}><svg viewBox="0 0 36 36" width="36" height="36"><rect x="6" y="6" width="24" height="24" rx="1" {...s} /></svg></div>
      <div className={toolCell}><svg viewBox="0 0 36 36" width="36" height="36"><circle cx="17.500" cy="17.500" r="13.500" {...s} /></svg></div>
      <div className={toolCell}><svg viewBox="0 0 36 36" width="36" height="36"><path d="M18.500 4L34 32H3z" {...s} strokeLinejoin="round" /></svg></div>
      <div className={toolCell}><svg viewBox="0 0 36 36" width="36" height="36"><path d="M5.500 30.500L30 6" {...s} strokeLinecap="round" /></svg></div>
      <div className={toolCell}>
        <svg viewBox="0 0 36 36" width="36" height="36">
          <path d="M5 31l4-16.500 11-6 8 8-5 11z" {...s} strokeLinejoin="round" /><path d="M5 31l11-11" {...s} />
          <circle cx="17.500" cy="19" r="2.600" fill="#666" /><path d="M19.500 7.500L24 4l8.500 8-4 5z" fill="#666" />
        </svg>
      </div>
      <div className={toolCell}><svg viewBox="0 0 36 36" width="36" height="36"><path d="M8.500 10V7h18v3M17.500 7v22.500M12.500 29.500h10" fill="none" stroke="#666" strokeWidth="3" strokeLinecap="round" strokeLinejoin="round" /></svg></div>
      <div className={toolCell}>
        <svg viewBox="0 0 36 36" width="36" height="36">
          <path d="M9.500 1v6M1 10h6" {...s} /><path d="M10.500 10.500H26l6 6v15.500a1 1 0 0 1-1 1H11.500a1 1 0 0 1-1-1z" {...s} /><path d="M26 10v6.500h6.500z" fill="#666" />
        </svg>
      </div>
      <div className={toolCell}><svg viewBox="0 0 36 36" width="36" height="36"><circle cx="20" cy="16" r="10.500" {...s} strokeWidth="2.400" /><path d="M27.500 23.500l7 8" {...s} strokeWidth="3.200" strokeLinecap="round" /></svg></div>
      <div className={`mt-auto ${toolCell}`}><svg viewBox="0 0 36 36" width="36" height="36"><rect x="5" y="4.500" width="26" height="28" rx="1" {...s} /><rect x="10" y="10" width="16" height="4.500" rx="1.500" fill="#666" /></svg></div>
      <div className={toolCell}><svg viewBox="0 0 36 36" width="36" height="36" fill="#1890e6"><path d="M18 3l15 10.500L18 24.500 3 13.500zM3 22.500l4-2.700 11 8 11-8 4 2.700L18 35z" /></svg></div>
      <div className={toolCell}><svg viewBox="0 0 36 36" width="36" height="36" fill="#666"><path d="M4 14a2 2 0 0 1 2-2h2V7.500A2 2 0 0 1 10 5.500h4a2 2 0 0 1 2 2V12h4V7.500a2 2 0 0 1 2-2h4a2 2 0 0 1 2 2V12h2a2 2 0 0 1 2 2v17a2 2 0 0 1-2 2H6a2 2 0 0 1-2-2z" /></svg></div>
    </nav>
  );
}

const LAYERS: string[] = [
  ...Array<string>(10).fill("iPad Pro 2nd Ge..."),
  ...Array<string>(10).fill("iPad Pro 3rd Ge..."),
  ...Array.from({ length: 10 }, (_, i) => `iPhone 5.5 – ${10 - i}`),
  ...Array.from({ length: 10 }, (_, i) => `iPhone 6.5 – ${10 - i}`),
];

function LayersPanel() {
  return (
    <aside className="flex w-[386px] shrink-0 flex-col bg-[#f7f7f7] leading-none whitespace-nowrap">
      <div className="mx-[20px] mt-[24px] flex h-[60px] items-center border-b-[2.300px] border-[#cfcfcf] pt-[2px] text-[22px] text-[#727272]">
        <svg viewBox="0 0 20 20" width="20" height="20"><circle cx="8" cy="8" r="6.500" fill="none" stroke="#6b6b6b" strokeWidth="2" /><path d="M12.500 12.500l6 6" stroke="#6b6b6b" strokeWidth="2.500" /></svg>
        <span className="ml-[23px] tracking-[0.100px]">All Items</span>
        <svg viewBox="0 0 20 13" width="20" height="13" className="ml-auto"><path d="M2 2l8 8 8-8" fill="none" stroke="#666" strokeWidth="4" strokeLinecap="round" /></svg>
      </div>
      <div className="mt-[53px] h-[20px] pl-[24px] text-[20px] tracking-[2.150px] text-[#9c9c9c]">ARTBOARDS</div>
      <ul className="mt-[14px] text-[20px] text-[#4f4f4f]">
        {LAYERS.map((name, i) => (
          <li key={i} className="flex h-[48px] items-center pl-[32px]">
            <svg viewBox="0 0 18 18" width="18" height="18"><path d="M2 1h9.500L17 6.500V16a1 1 0 0 1-1 1H2a1 1 0 0 1-1-1V2a1 1 0 0 1 1-1z" fill="none" stroke="#606060" strokeWidth="2" /><path d="M11 0v7h7z" fill="#606060" /></svg>
            <span className={`ml-[18px] w-[188px] pt-[1px] ${i < 20 ? "tracking-[0.060px]" : "tracking-[0.450px]"}`}>{name}</span>
            <svg viewBox="0 0 20 22" width="20" height="22" className="mb-[2px]"><path d="M7 4H2a1 1 0 0 0-1 1v15a1 1 0 0 0 1 1h15a1 1 0 0 0 1-1v-6M10.500 1H19v9M19 1l-8.500 9.500" fill="none" stroke="#606060" strokeWidth="2" /></svg>
          </li>
        ))}
      </ul>
    </aside>
  );
}

function AlignRow() {
  return (
    <div className="flex h-[68px] border-b-[4.600px] border-[#e3e3e3]">
      <div className="flex w-[236px] items-center border-r-[2.300px] border-[#e3e3e3] pl-[26px]">
        <svg viewBox="0 0 176 28" width="176" height="28" fill="#bdbdbd">
          <rect x="0" y="2" width="28" height="2" /><rect x="4" y="6" width="8" height="20" rx="1" /><rect x="16" y="6" width="8" height="13" rx="1" />
          <rect x="52" y="14" width="28" height="1.500" /><rect x="56" y="4.500" width="8" height="20" rx="1" /><rect x="68" y="8" width="8" height="14" rx="1" />
          <rect x="102" y="25" width="28" height="2" /><rect x="106" y="2" width="8" height="21" rx="1" /><rect x="118" y="9" width="8" height="14" rx="1" />
          <rect x="155" y="0" width="2" height="28" /><rect x="160" y="4.500" width="8" height="19" rx="1" /><rect x="171.500" y="0" width="2" height="28" />
        </svg>
      </div>
      <div className="flex items-center pl-[26px]">
        <svg viewBox="0 0 174 28" width="174" height="28" fill="#bdbdbd">
          <rect x="0" y="0" width="2" height="28" /><rect x="4" y="5" width="14" height="8" rx="2" /><rect x="4" y="17" width="21" height="8" rx="2" />
          <rect x="59" y="0" width="2" height="28" /><rect x="53" y="5" width="14" height="8" rx="2" /><rect x="49" y="17" width="21" height="8" rx="2" />
          <rect x="118" y="0" width="2" height="28" /><rect x="102" y="5" width="14" height="8" rx="2" /><rect x="95" y="17" width="21" height="8" rx="2" />
          <rect x="142" y="5" width="28" height="2" /><rect x="146" y="10" width="20" height="8" rx="2" /><rect x="142" y="21.500" width="28" height="2" />
        </svg>
      </div>
    </div>
  );
}

function Field({ label, children, className = "" }: { label: string; children: React.ReactNode; className?: string }) {
  return (
    <div className={`flex items-center ${className}`}>
      <span className="text-[18px] font-medium">{label}</span>
      <div className="ml-auto flex h-[44px] w-[84px] items-center border-b-[2.300px] border-[#dedede] text-[23px]">{children}</div>
    </div>
  );
}

function Inspector() {
  const shape = "M1 1h18v7h8v19H9v-7H1z";
  return (
    <aside className="flex w-[466px] shrink-0 flex-col bg-[#f7f7f7] leading-none whitespace-nowrap text-[#9c9c9c]">
      <div className="h-[4px] bg-[#f7f7f7]" />
      <AlignRow />
      <div className="flex h-[96px] items-center border-b-[4.600px] border-[#e3e3e3] pr-[32px] pl-[24px]">
        <div className="flex h-[44px] w-[182px] items-center rounded-[5px] border-[2.300px] border-[#e2e2e2] bg-[#fcfcfc] pl-[12px] text-[21px] font-medium tracking-[-0.250px] text-[#bcbcbc]">
          <svg viewBox="0 0 26 26" width="26" height="26" className="mr-[12px] shrink-0" fill="none" stroke="#bdbdbd" strokeWidth="2">
            <rect x="1" y="1" width="10" height="10" rx="1" fill="#d8d8d8" /><rect x="15" y="1" width="10" height="10" rx="1" /><rect x="1" y="15" width="10" height="10" rx="1" /><rect x="15" y="15" width="10" height="10" rx="1" />
          </svg>
          Repeat Grid
        </div>
        <svg viewBox="0 0 172 28" width="172" height="28" className="ml-auto" fill="none" stroke="#bdbdbd" strokeWidth="2">
          <path d={shape} fill="#eeeeee" />
          <g transform="translate(48 0)"><rect x="1" y="1" width="18" height="19" fill="#eeeeee" /><rect x="9" y="9" width="18" height="18" fill="#f7f7f7" /></g>
          <g transform="translate(96 0)"><rect x="9" y="9" width="10" height="11" fill="#eeeeee" /><rect x="1" y="1" width="18" height="19" /><rect x="9" y="9" width="18" height="18" /></g>
          <g transform="translate(144 0)"><rect x="1" y="1" width="18" height="19" fill="#eeeeee" /><rect x="9" y="9" width="18" height="18" fill="#eeeeee" /><rect x="9" y="9" width="10" height="11" fill="#f7f7f7" /></g>
        </svg>
      </div>
      <div className="flex h-[72px] items-center border-b-[4.600px] border-[#e3e3e3] pr-[32px] pl-[24px] text-[19px] font-medium tracking-[1.700px]">
        COMPONENT
        <svg viewBox="0 0 20 20" width="20" height="20" className="ml-auto"><path d="M10 0v20M0 10h20" stroke="#a8a8a8" strokeWidth="2.200" /></svg>
      </div>
      <div className="flex h-[192px] border-b-[4.600px] border-[#e3e3e3] pt-[28px] pl-[24px]">
        <div className="flex w-[116px] flex-col gap-[28px]">
          <Field label="W">0</Field>
          <Field label="H" className="pl-[3px]">0</Field>
        </div>
        <svg viewBox="0 0 18 76" width="18" height="76" className="mt-[18px]" fill="none" stroke="#d6d6d6" strokeWidth="2">
          <path d="M0 3h11v19M0 73h11V54" /><path d="M7 36v-2a4 4 0 0 1 7-2" strokeWidth="2.200" /><rect x="6" y="37" width="11" height="8" fill="#d6d6d6" stroke="#d6d6d6" />
        </svg>
        <div className="ml-[16px] flex w-[112px] flex-col gap-[28px]">
          <Field label="X">0</Field>
          <Field label="Y">0</Field>
        </div>
      </div>
      <div className="h-[164px] border-b-[4.600px] border-[#e3e3e3] px-[24px] pt-[25px]">
        <div className="text-[19px] font-medium tracking-[1.900px]">LAYOUT</div>
        <div className="mt-[50px] flex items-center pr-[2px] text-[21px] font-medium tracking-[-0.050px]">
          Responsive Resize
          <span className="ml-auto flex h-[28px] w-[52px] items-center justify-end rounded-full bg-[#cecece] pr-[4px]"><span className="h-[20px] w-[20px] rounded-full bg-[#fafafa]" /></span>
        </div>
      </div>
      <div className="h-[168px] border-b-[4.600px] border-[#e3e3e3] px-[24px] pt-[25px]">
        <div className="text-[19px] font-medium tracking-[1.900px]">APPEARANCE</div>
        <div className="mt-[42px] flex items-center pr-[2px]">
          <svg viewBox="0 0 24 24" width="24" height="24" className="ml-[2px]">
            <path d="M7 2h5v5H7zM17 2h5v5h-5zM2 7h5v5H2zM12 7h5v5h-5zM7 12h5v5H7zM17 12h5v5h-5zM2 17h5v5H2zM12 17h5v5h-5z" fill="#dedede" />
            <rect x="1" y="1" width="22" height="22" rx="1" fill="none" stroke="#bdbdbd" strokeWidth="2" />
          </svg>
          <div className="ml-[16px] flex h-[46px] w-[72px] items-center border-b-[2.300px] border-[#dedede] text-[22px]">0%</div>
          <div className="ml-[19px] flex h-[6px] w-[283px] items-center rounded-full bg-[#e9e9e9]"><span className="h-[24px] w-[24px] rounded-full bg-[#fcfcfc] shadow-[0_1px_3px_rgba(0,0,0,0.25)]" /></div>
        </div>
      </div>
    </aside>
  );
}

export default function App() {
  return (
    <div className="h-[2141px] w-[4096px] overflow-hidden bg-white">
      <div className="h-[2412px] w-[4614px] overflow-hidden bg-white pt-[76px] pl-[112px] font-[Inter,sans-serif] text-black [text-rendering:geometricPrecision] [zoom:0.88773]">
        <div className="h-[2188px] w-[4390px] rounded-[20px] shadow-[0_0_2px_rgba(0,0,0,0.6),0_36px_80px_rgba(0,0,0,0.5)]">
          <div className="flex h-full w-full flex-col overflow-hidden rounded-[20px]">
            <Header />
            <div className="flex min-h-0 flex-1 overflow-hidden">
              <Toolbar />
              <LayersPanel />
              <Canvas />
              <Inspector />
            </div>
          </div>
        </div>
      </div>
    </div>
  );
}
